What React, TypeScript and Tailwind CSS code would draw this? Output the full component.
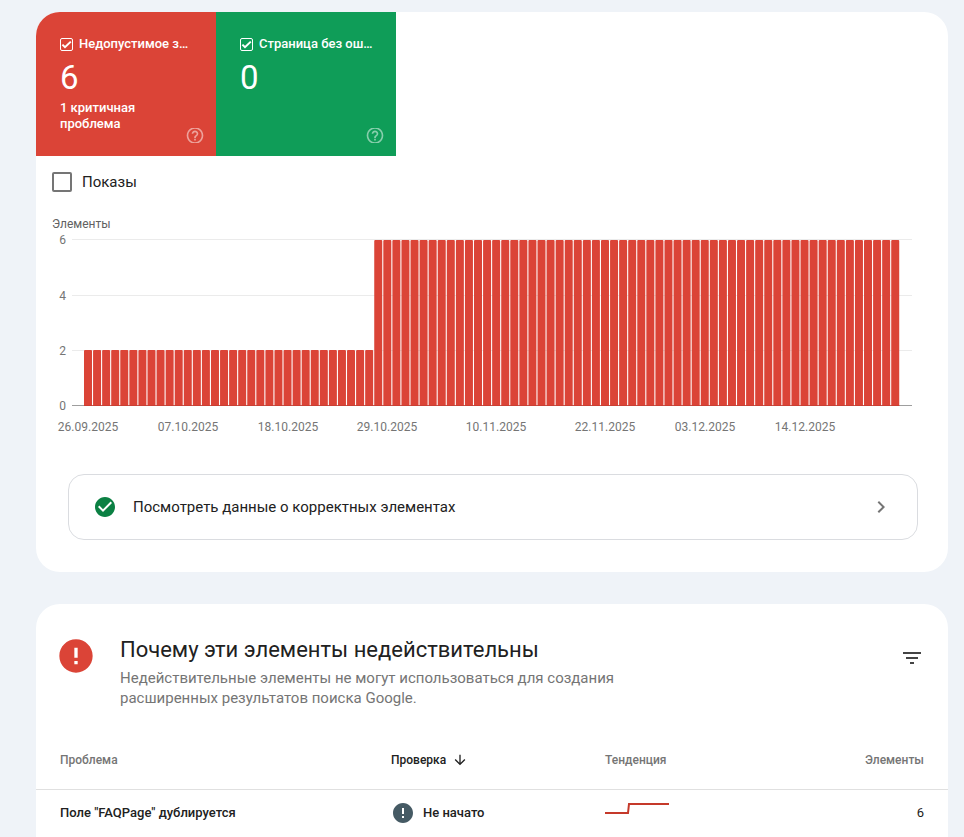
import { useState } from 'react';
import {
  MdArrowDownward, MdCheckCircle, MdChevronRight, MdError, MdFilterList,
} from 'react-icons/md';

const DAYS = 90;
const JUMP_DAY = 32;      // first day with 6 items instead of 2

const daily = Array.from({ length: DAYS }, (_, i) => (i < JUMP_DAY ? 2 : 6));

const dateTicks = [
  { day: 0,  label: '26.09.2025' },
  { day: 11, label: '07.10.2025' },
  { day: 22, label: '18.10.2025' },
  { day: 33, label: '29.10.2025' },
  { day: 45, label: '10.11.2025' },
  { day: 57, label: '22.11.2025' },
  { day: 68, label: '03.12.2025' },
  { day: 79, label: '14.12.2025' },
];

const issues = [
  { name: 'Поле "FAQPage" дублируется', status: 'Не начато', items: 6 },
];

function HelpIcon() {
  return (
    <svg viewBox="0 3 24 18" width="20" height="15" fill="currentColor" aria-hidden="true">
      <path d="M11 18h2v-2h-2v2zm1-16C6.48 2 2 6.48 2 12s4.48 10 10 10 10-4.48 10-10S17.52 2 12 2zm0 18c-4.41 0-8-3.59-8-8s3.59-8 8-8 8 3.59 8 8-3.59 8-8 8zm0-14c-2.21 0-4 1.79-4 4h2c0-1.1.9-2 2-2s2 .9 2 2c0 2-3 1.75-3 5h2c0-2.25 3-2.5 3-5 0-2.21-1.79-4-4-4z" />
    </svg>
  );
}

interface TileProps {
  id: string;
  title: string;
  value: number;
  note?: string;
  className: string;
}

function StatusTile({ id, title, value, note, className }: TileProps) {
  const [on, setOn] = useState(true);

  return (
    <div className={`flex h-36 w-45 flex-col pt-6 pl-6 text-[13px] leading-4 font-medium text-white ${className}`}>
      <div className="flex items-center gap-1.5">
        <span className="grid size-[13px] shrink-0">
          <input
            id={id}
            type="checkbox"
            checked={on}
            onChange={(e) => setOn(e.target.checked)}
            className="size-[13px] appearance-none rounded-xs border border-white [grid-area:1/1]"
          />
          {on && (
            <svg viewBox="0 0 13 13" className="pointer-events-none size-[13px] [grid-area:1/1]" fill="none" stroke="currentColor" strokeWidth="2">
              <path d="M2.4 6.6 L5 9.2 L10.8 3.6" />
            </svg>
          )}
        </span>
        <label htmlFor={id} className="whitespace-nowrap">{title}</label>
      </div>
      <div className="mt-1.5 text-[33px] leading-10 font-normal">{value}</div>
      <div className="mt-0.5 flex flex-1 justify-between pr-[11px]">
        <p className="w-28">{note}</p>
        <button type="button" aria-label="Справка" className="mb-[13px] self-end text-white/50">
          <HelpIcon />
        </button>
      </div>
    </div>
  );
}

function ItemsChart() {
  const step = 9.07;
  const left = 32;
  const base = 174;
  const unit = 27.6;

  return (
    <svg viewBox="0 0 860 210" className="block w-full font-[Roboto,sans-serif] text-[12px]" role="img" aria-label="Элементы">
      {[0, 2, 4, 6].map((v) => (
        <g key={v}>
          <rect x="20" y={Math.round(base - 1 - v * unit)} width="840" height="1" fill={v === 0 ? '#9e9e9e' : '#ebebeb'} />
          <text x="14" y={Math.round(base + 4 - v * unit)} textAnchor="end" fill="#757575">{v}</text>
        </g>
      ))}
      {daily.map((v, i) => {
        const x = left + i * step;
        const top = Math.floor(base - v * unit);
        return (
          <path
            key={i}
            d={`M${x} ${base}V${top + 1}q0 -1 1 -1h6q1 0 1 1V${base}z`}
            fill="#db4437"
          />
        );
      })}
      <rect x={left} y={base - 1} width={DAYS * step - 1} height="1" fill="#c03a2e" opacity="0.6" />
      {dateTicks.map((d) => (
        <text key={d.day} x={Math.round(left + 4 + d.day * step)} y="199" textAnchor="middle" fill="#757575">
          {d.label}
        </text>
      ))}
    </svg>
  );
}

export default function App() {
  return (
    <main className="flex min-h-screen flex-col bg-[#eff3f8] pt-3 pr-4 pl-9 font-[Roboto,sans-serif] text-[#212121]">

      {/* Status tiles and chart */}
      <section className="overflow-hidden rounded-3xl bg-white pb-8">
        <div className="flex">
          <StatusTile id="invalid" title="Недопустимое з…" value={6} note="1 критичная проблема" className="bg-[#db4437]" />
          <StatusTile id="valid" title="Страница без ош…" value={0} className="bg-[#0f9d58]" />
        </div>

        <div className="flex items-center gap-2.5 px-4 pt-4">
          <input id="impressions" type="checkbox" className="size-5 appearance-none rounded-xs border-2 border-[#757575] checked:bg-[#757575]" />
          <label htmlFor="impressions" className="text-[15px] leading-5">Показы</label>
        </div>

        <div className="pt-6 pr-9 pl-4">
          <div className="text-[12px] leading-4 text-[#616161]">Элементы</div>
          <ItemsChart />
        </div>

        <div className="pt-8 pr-[30px] pl-8">
          <button type="button" className="flex h-[66px] w-full items-center rounded-2xl border border-[#dadce0] px-6 text-left text-[15px]">
            <MdCheckCircle className="size-6 text-[#0b8043]" />
            <span className="ml-4 flex-1">Посмотреть данные о корректных элементах</span>
            <MdChevronRight className="size-6 text-[#757575]" />
          </button>
        </div>
      </section>

      {/* Issues */}
      <section className="mt-8 flex-1 rounded-t-3xl bg-white">
        <header className="flex items-start pt-8 pr-6 pl-5">
          <MdError className="size-10 shrink-0 text-[#db4437]" />
          <div className="ml-6 flex-1">
            <h2 className="text-[22px] leading-7">Почему эти элементы недействительны</h2>
            <p className="mt-1 max-w-[520px] text-[15px] leading-5 text-[#757575]">
              Недействительные элементы не могут использоваться для создания расширенных результатов поиска Google.
            </p>
          </div>
          <button type="button" aria-label="Фильтр" className="mt-2.5 text-[#444444]">
            <MdFilterList className="size-6" />
          </button>
        </header>

        <table className="mt-6 w-full table-fixed text-left text-[13px] leading-5">
          <thead>
            <tr className="h-[57px] border-b border-[#e0e0e0] text-[12px] text-[#757575]">
              <th className="w-[355px] pl-6 font-medium">Проблема</th>
              <th className="w-[214px] font-medium text-[#212121]">
                <button type="button" className="flex items-center gap-1.5">
                  Проверка
                  <MdArrowDownward className="size-4" />
                </button>
              </th>
              <th className="font-medium">Тенденция</th>
              <th className="pr-6 text-right font-medium">Элементы</th>
            </tr>
          </thead>
          <tbody>
            {issues.map((issue) => (
              <tr key={issue.name} className="h-[47px]">
                <td className="pl-6 font-medium">{issue.name}</td>
                <td className="font-medium">
                  <div className="flex items-center gap-2">
                    <MdError className="size-6 text-[#455a64]" />
                    {issue.status}
                  </div>
                </td>
                <td>
                  <svg width="64" height="20" viewBox="0 0 64 20" fill="none" stroke="#c5392a" strokeWidth="2" aria-hidden="true">
                    <path d="M0 10H23L24 1H64" />
                  </svg>
                </td>
                <td className="pr-6 text-right">{issue.items}</td>
              </tr>
            ))}
          </tbody>
        </table>
      </section>
    </main>
  );
}
